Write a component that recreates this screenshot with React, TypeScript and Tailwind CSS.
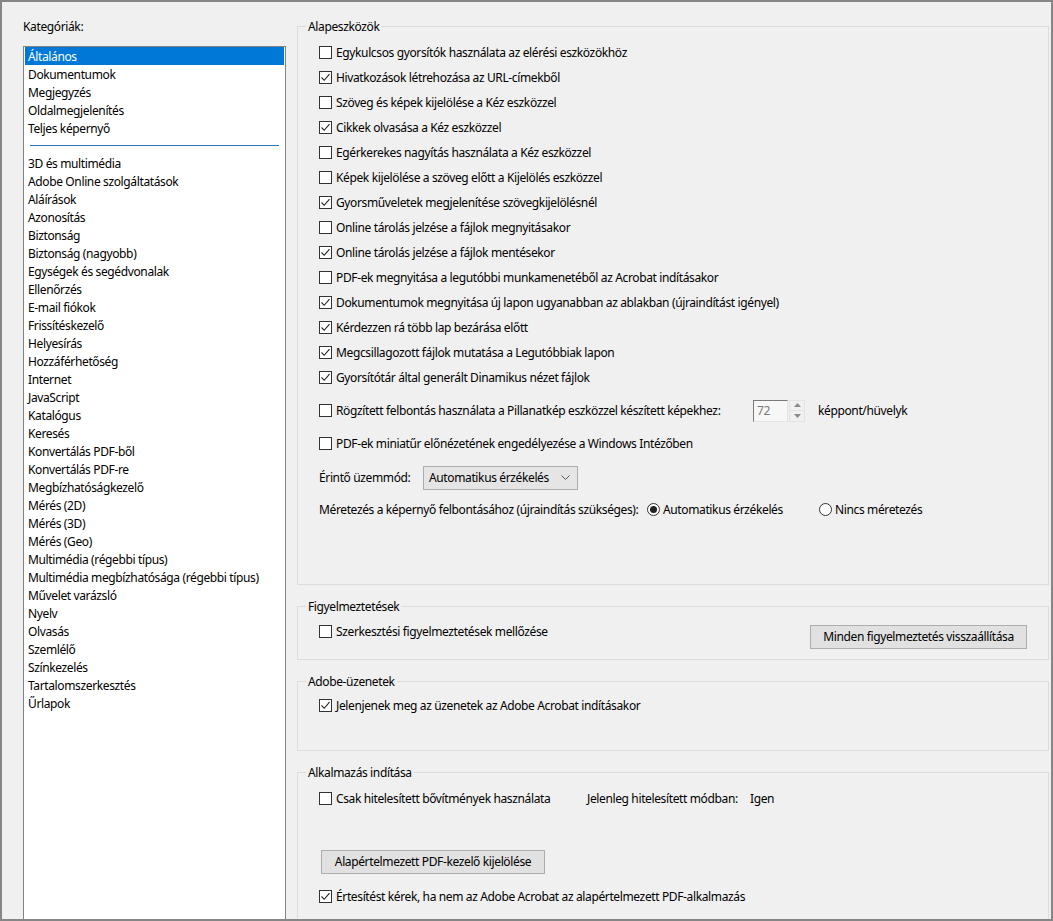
import React from 'react'

const font = { fontFamily: '"Noto Sans", "Open Sans", sans-serif' }

const categoriesTop = ['Általános', 'Dokumentumok', 'Megjegyzés', 'Oldalmegjelenítés', 'Teljes képernyő']

const categoriesRest = [
  '3D és multimédia',
  'Adobe Online szolgáltatások',
  'Aláírások',
  'Azonosítás',
  'Biztonság',
  'Biztonság (nagyobb)',
  'Egységek és segédvonalak',
  'Ellenőrzés',
  'E-mail fiókok',
  'Frissítéskezelő',
  'Helyesírás',
  'Hozzáférhetőség',
  'Internet',
  'JavaScript',
  'Katalógus',
  'Keresés',
  'Konvertálás PDF-ből',
  'Konvertálás PDF-re',
  'Megbízhatóságkezelő',
  'Mérés (2D)',
  'Mérés (3D)',
  'Mérés (Geo)',
  'Multimédia (régebbi típus)',
  'Multimédia megbízhatósága (régebbi típus)',
  'Művelet varázsló',
  'Nyelv',
  'Olvasás',
  'Szemlélő',
  'Színkezelés',
  'Tartalomszerkesztés',
  'Űrlapok',
]

const basicOptions: [string, boolean][] = [
  ['Egykulcsos gyorsítók használata az elérési eszközökhöz', false],
  ['Hivatkozások létrehozása az URL-címekből', true],
  ['Szöveg és képek kijelölése a Kéz eszközzel', false],
  ['Cikkek olvasása a Kéz eszközzel', true],
  ['Egérkerekes nagyítás használata a Kéz eszközzel', false],
  ['Képek kijelölése a szöveg előtt a Kijelölés eszközzel', false],
  ['Gyorsműveletek megjelenítése szövegkijelölésnél', true],
  ['Online tárolás jelzése a fájlok megnyitásakor', false],
  ['Online tárolás jelzése a fájlok mentésekor', true],
  ['PDF-ek megnyitása a legutóbbi munkamenetéből az Acrobat indításakor', false],
  ['Dokumentumok megnyitása új lapon ugyanabban az ablakban (újraindítást igényel)', true],
  ['Kérdezzen rá több lap bezárása előtt', true],
  ['Megcsillagozott fájlok mutatása a Legutóbbiak lapon', true],
  ['Gyorsítótár által generált Dinamikus nézet fájlok', true],
]

function Checkbox({ checked }: { checked: boolean }) {
  return (
    <span className="w-[13px] h-[13px] border border-[#333333] bg-white flex items-center justify-center shrink-0">
      {checked && (
        <svg width="11" height="11" viewBox="0 0 11 11">
          <polyline points="1.5,5.5 4.2,8.3 9.5,2.2" fill="none" stroke="#222" strokeWidth="1.1" />
        </svg>
      )}
    </span>
  )
}

function CheckRow({ label, checked }: { label: string; checked: boolean }) {
  return (
    <div className="h-[25px] flex items-center">
      <Checkbox checked={checked} />
      <span className="ml-[4px] whitespace-nowrap">{label}</span>
    </div>
  )
}

function Radio({ checked }: { checked: boolean }) {
  return (
    <span className="w-[13px] h-[13px] rounded-full border border-[#333333] bg-white flex items-center justify-center shrink-0">
      {checked && <span className="w-[7px] h-[7px] rounded-full bg-[#222]" />}
    </span>
  )
}

function Group({ title, height, children }: { title: string; height: string; children: React.ReactNode }) {
  return (
    <fieldset className={`border border-[#dcdcdc] ${height} shrink-0`}>
      <legend className="ml-[8px] px-[2px] leading-[16px] pt-[2px]">{title}</legend>
      {children}
    </fieldset>
  )
}

function Button({ children, className }: { children: React.ReactNode; className?: string }) {
  return (
    <div
      className={`h-[24px] bg-[#e1e1e1] border border-[#adadad] flex items-center justify-center whitespace-nowrap ${className ?? ''}`}
    >
      {children}
    </div>
  )
}

export default function App() {
  return (
    <div
      className="w-[1053px] h-[921px] bg-[#f0f0f0] border-2 border-[#868686] flex text-[12px] tracking-[-0.37px] text-black overflow-hidden"
      style={font}
    >
      {/* Categories */}
      <div className="w-[284px] shrink-0 pl-[21px] flex flex-col">
        <div className="h-[44px] pt-[17px] leading-[16px]">Kategóriák:</div>
        <div className="flex-1 bg-white border border-[#828282] border-b-0 px-[1px]">
          {categoriesTop.map((c, i) => (
            <div
              key={c}
              className={`h-[18px] leading-[19px] pl-[3px] ${i === 0 ? 'bg-[#0078d7] text-white' : ''}`}
            >
              {c}
            </div>
          ))}
          <div className="h-[17px] flex items-center px-[5px]">
            <div className="h-[1px] w-full bg-[#2a74b8]" />
          </div>
          {categoriesRest.map((c) => (
            <div key={c} className="h-[18px] leading-[19px] pl-[3px]">
              {c}
            </div>
          ))}
        </div>
      </div>

      {/* Settings */}
      <div className="ml-[11px] w-[752px] shrink-0 pt-[15px] flex flex-col gap-[12px] overflow-hidden">
        <Group title="Alapeszközök" height="h-[568px]">
          <div className="pl-[21px] pt-[5px]">
            {basicOptions.map(([label, checked]) => (
              <CheckRow key={label} label={label} checked={checked} />
            ))}
            <div className="h-[25px] mt-[8px] flex items-center">
              <div className="w-[434px] flex items-center">
                <Checkbox checked={false} />
                <span className="ml-[4px] whitespace-nowrap">
                  Rögzített felbontás használata a Pillanatkép eszközzel készített képekhez:
                </span>
              </div>
              <div className="w-[35px] h-[22px] bg-[#f7f7f7] border border-[#e3e3e3] border-t-[#7a7a7a] border-l-[#7a7a7a] pl-[3px] leading-[20px] text-[#7a7a7a]">
                72
              </div>
              <div className="ml-[1px] w-[16px] h-[22px] flex flex-col border border-[#e3e3e3]">
                <div className="flex-1 flex items-center justify-center border-b border-[#e3e3e3]">
                  <svg width="7" height="4" viewBox="0 0 7 4">
                    <polygon points="0,4 3.5,0 7,4" fill="#8a8a8a" />
                  </svg>
                </div>
                <div className="flex-1 flex items-center justify-center">
                  <svg width="7" height="4" viewBox="0 0 7 4">
                    <polygon points="0,0 3.5,4 7,0" fill="#8a8a8a" />
                  </svg>
                </div>
              </div>
              <span className="ml-[13px] whitespace-nowrap">képpont/hüvelyk</span>
            </div>
            <div className="mt-[8px]">
              <CheckRow label="PDF-ek miniatűr előnézetének engedélyezése a Windows Intézőben" checked={false} />
            </div>
            <div className="h-[25px] mt-[9px] flex items-center">
              <span className="w-[104px]">Érintő üzemmód:</span>
              <div className="w-[155px] h-[24px] bg-[#e5e5e5] border border-[#adadad] flex items-center pl-[5px] pr-[7px]">
                <span className="flex-1">Automatikus érzékelés</span>
                <svg width="9" height="5" viewBox="0 0 9 5">
                  <polyline points="0.5,0.5 4.5,4.5 8.5,0.5" fill="none" stroke="#555" strokeWidth="1" />
                </svg>
              </div>
            </div>
            <div className="h-[25px] mt-[7px] flex items-center">
              <span className="w-[328px] whitespace-nowrap">Méretezés a képernyő felbontásához (újraindítás szükséges):</span>
              <div className="w-[172px] flex items-center">
                <Radio checked />
                <span className="ml-[3px]">Automatikus érzékelés</span>
              </div>
              <Radio checked={false} />
              <span className="ml-[3px]">Nincs méretezés</span>
            </div>
          </div>
        </Group>

        <Group title="Figyelmeztetések" height="h-[63px]">
          <div className="pl-[21px] pr-[21px] pt-[4px] flex items-start justify-between">
            <CheckRow label="Szerkesztési figyelmeztetések mellőzése" checked={false} />
            <Button className="mt-[6px] w-[217px]">Minden figyelmeztetés visszaállítása</Button>
          </div>
        </Group>

        <Group title="Adobe-üzenetek" height="h-[79px]">
          <div className="pl-[21px] pt-[3px]">
            <CheckRow label="Jelenjenek meg az üzenetek az Adobe Acrobat indításakor" checked />
          </div>
        </Group>

        <Group title="Alkalmazás indítása" height="h-[200px]">
          <div className="pl-[21px] pt-[5px]">
            <div className="h-[25px] flex items-center">
              <div className="w-[268px] flex items-center">
                <Checkbox checked={false} />
                <span className="ml-[4px] whitespace-nowrap">Csak hitelesített bővítmények használata</span>
              </div>
              <span className="w-[163px] whitespace-nowrap">Jelenleg hitelesített módban:</span>
              <span>Igen</span>
            </div>
            <Button className="mt-[39px] ml-[2px] w-[224px]">Alapértelmezett PDF-kezelő kijelölése</Button>
            <div className="mt-[10px]">
              <CheckRow
                label="Értesítést kérek, ha nem az Adobe Acrobat az alapértelmezett PDF-alkalmazás"
                checked
              />
            </div>
          </div>
        </Group>
      </div>
    </div>
  )
}
